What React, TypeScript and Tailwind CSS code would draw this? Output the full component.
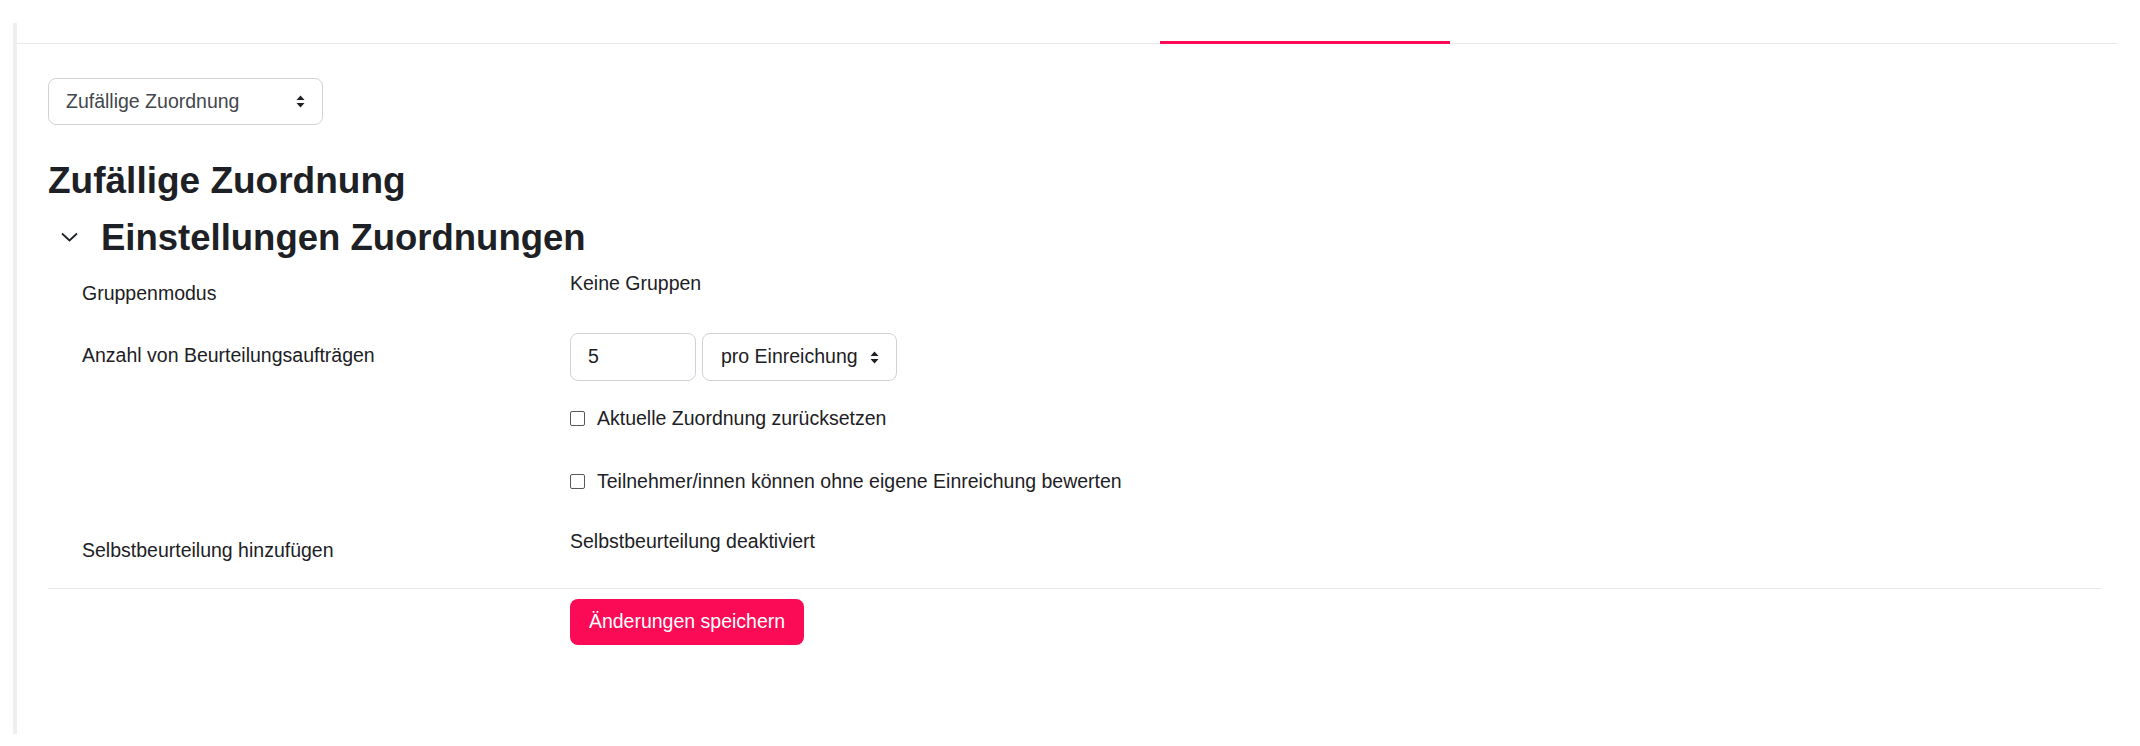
import React from 'react'

function SortArrows() {
    return (
        <svg width="9" height="13" viewBox="0 0 9 13" className="shrink-0">
            <path d="M4.5 0.5 L8.5 5 L0.5 5 Z" fill="#1d2125" />
            <path d="M4.5 12.5 L8.5 8 L0.5 8 Z" fill="#1d2125" />
        </svg>
    )
}

function Checkbox({ label }: { label: string }) {
    return (
        <label className="flex items-center gap-[12px] leading-[28px]">
            <span className="h-[15px] w-[15px] shrink-0 rounded-[2px] border-[1.5px] border-[#55595e] bg-white" />
            <span>{label}</span>
        </label>
    )
}

export default function App() {
    return (
        <div
            className="flex h-[746px] w-[2140px] overflow-hidden bg-white text-[19.5px] text-[#1d2125]"
            style={{ fontFamily: '"Liberation Sans", Arial, sans-serif' }}
        >
            {/* left drawer edge */}
            <div className="ml-[13px] mt-[23px] h-[711px] w-[4px] shrink-0 bg-[#efefef]" />

            <div className="mr-[22px] flex flex-1 flex-col">
                {/* tab bar */}
                <div className="flex h-[44px] items-end border-b border-[#e9e9e9]">
                    <div className="w-[1143px]" />
                    <div className="mb-[-1px] h-[3px] w-[290px] bg-[#fb0a55]" />
                </div>

                <div className="pl-[31px] pr-[16px]">
                    <button className="mt-[34px] flex h-[47px] w-[275px] items-center justify-between rounded-[8px] border border-[#cfd3d7] bg-white pl-[17px] pr-[17px] text-left text-[#42474d]">
                        <span>Zufällige Zuordnung</span>
                        <SortArrows />
                    </button>

                    <h2 className="mt-[34px] text-[37px] leading-[43px] font-bold">
                        Zufällige Zuordnung
                    </h2>

                    <div className="mt-[14px] flex items-center">
                        <svg
                            width="17"
                            height="10"
                            viewBox="0 0 17 10"
                            className="ml-[13px] mt-[-2px]"
                        >
                            <path
                                d="M1 1.5 L8.5 8.5 L16 1.5"
                                fill="none"
                                stroke="#1d2125"
                                strokeWidth="1.8"
                            />
                        </svg>
                        <h3 className="ml-[23px] text-[36.5px] leading-[43px] font-bold">
                            Einstellungen Zuordnungen
                        </h3>
                    </div>

                    <div className="mt-[10px] pl-[34px]">
                        {/* Gruppenmodus */}
                        <div className="flex items-start">
                            <div className="w-[488px] pt-[10px] leading-[28px]">
                                Gruppenmodus
                            </div>
                            <div className="leading-[28px]">Keine Gruppen</div>
                        </div>

                        {/* Anzahl */}
                        <div className="mt-[26px] flex items-start">
                            <div className="w-[488px] pt-[8px] leading-[28px]">
                                Anzahl von Beurteilungsaufträgen
                            </div>
                            <div className="flex flex-col">
                                <div className="flex gap-[6px]">
                                    <div className="flex h-[48px] w-[126px] items-center rounded-[8px] border border-[#cfd3d7] pl-[17px]">
                                        5
                                    </div>
                                    <div className="flex h-[48px] w-[195px] items-center justify-between rounded-[8px] border border-[#cfd3d7] pl-[18px] pr-[17px]">
                                        <span>pro Einreichung</span>
                                        <SortArrows />
                                    </div>
                                </div>
                                <div className="mt-[23px]">
                                    <Checkbox label="Aktuelle Zuordnung zurücksetzen" />
                                </div>
                                <div className="mt-[35px]">
                                    <Checkbox label="Teilnehmer/innen können ohne eigene Einreichung bewerten" />
                                </div>
                            </div>
                        </div>

                        {/* Selbstbeurteilung */}
                        <div className="mt-[32px] flex items-start">
                            <div className="w-[488px] pt-[9px] leading-[28px]">
                                Selbstbeurteilung hinzufügen
                            </div>
                            <div className="leading-[28px]">
                                Selbstbeurteilung deaktiviert
                            </div>
                        </div>
                    </div>

                    <div className="mt-[24px] border-t border-[#e6e8ea]" />

                    <button className="ml-[522px] mt-[10px] h-[46px] w-[234px] rounded-[8px] bg-[#fb0a55] text-white">
                        Änderungen speichern
                    </button>
                </div>
            </div>
        </div>
    )
}
